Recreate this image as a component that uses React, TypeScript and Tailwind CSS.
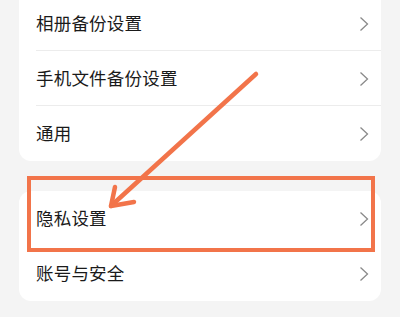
const groups = [
  ['相册备份设置', '手机文件备份设置', '通用'],
  ['隐私设置', '账号与安全'],
];

function Chevron() {
  return (
    <svg width="10" height="16" viewBox="0 0 10 16" className="shrink-0">
      <path d="M1.5 1.5 L8.5 8 L1.5 14.5" fill="none" stroke="#8a8a8a" strokeWidth="1.3" />
    </svg>
  );
}

function Row({ label, divider }: { label: string; divider: boolean }) {
  return (
    <div className="relative flex items-center justify-between pl-[17px] pr-[12px] h-[55px]">
      <span className="text-[17.5px] text-[#1a1a1a] tracking-[0.2px]">{label}</span>
      <Chevron />
      {divider && <div className="absolute bottom-0 left-[17px] right-0 h-px bg-[#ececec]" />}
    </div>
  );
}

export default function App() {
  return (
    <div
      className="relative w-[400px] h-[317px] overflow-hidden bg-[#f4f4f4] px-[19px]"
      style={{ fontFamily: '"Noto Sans CJK SC", "Noto Sans", sans-serif' }}
    >
      <div className="mt-[-4px] flex flex-col gap-[30px]">
        <div className="bg-white rounded-b-[12px] overflow-hidden">
          {groups[0].map((g, i) => (
            <Row key={g} label={g} divider={i < groups[0].length - 1} />
          ))}
        </div>
        <div className="bg-white rounded-[12px] overflow-hidden">
          {groups[1].map((g) => (
            <Row key={g} label={g} divider={false} />
          ))}
        </div>
      </div>

      {/* highlight box */}
      <div className="absolute left-[27px] top-[176px] w-[348px] h-[76px] border-[4px] border-[#f2744a]" />

      {/* arrow */}
      <svg className="absolute inset-0" width="400" height="317" viewBox="0 0 400 317">
        <g stroke="#f2744a" strokeWidth="4.5" strokeLinecap="round" fill="none">
          <line x1="256" y1="74" x2="112" y2="205" />
          <line x1="111" y1="206" x2="115" y2="187" />
          <line x1="111" y1="206" x2="134" y2="202" />
        </g>
      </svg>
    </div>
  );
}
